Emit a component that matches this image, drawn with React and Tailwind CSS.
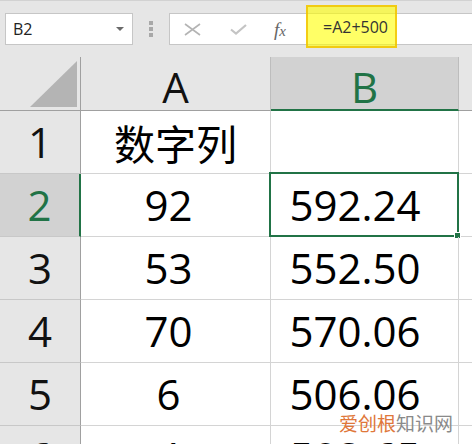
import React from "react"

const rows = [
  { n: "1", a: "数字列", b: "", cjk: true },
  { n: "2", a: "92", b: "592.24" },
  { n: "3", a: "53", b: "552.50" },
  { n: "4", a: "70", b: "570.06" },
  { n: "5", a: "6", b: "506.06" },
  { n: "6", a: "4", b: "503.65" },
]

const num = { fontFamily: '"Open Sans", "Noto Sans", sans-serif' }
const cjk = { fontFamily: '"Noto Sans CJK SC", "Noto Sans", sans-serif' }

export default function App() {
  return (
    <div className="relative w-[472px] h-[444px] overflow-hidden bg-white" style={num}>
      {/* formula bar */}
      <div className="h-[57px] bg-[#e6e6e6] border-t border-[#d2d2d2] flex items-start pt-[12px]">
        <div className="ml-[5px] w-[128px] h-[32px] bg-white border border-[#c6c6c6] flex items-center pl-[7px] pr-[8px]">
          <span className="text-[16px] text-[#222] flex-1">B2</span>
          <svg width="8" height="4" viewBox="0 0 8 4">
            <path d="M0 0 L8 0 L4 4 Z" fill="#6a6a6a" />
          </svg>
        </div>
        <div className="w-[36px] h-[32px] flex flex-col items-start justify-center gap-[2px] pl-[16px]">
          <div className="w-[4px] h-[4px] bg-[#a8a8a8]" />
          <div className="w-[4px] h-[4px] bg-[#a8a8a8]" />
          <div className="w-[4px] h-[4px] bg-[#a8a8a8]" />
        </div>
        <div className="flex-1 h-[32px] bg-white border-y border-l border-[#c6c6c6] flex items-center">
          <svg className="ml-[14px]" width="17" height="13" viewBox="0 0 17 13">
            <path d="M1 1 L16 12 M16 1 L1 12" stroke="#b4b4b4" strokeWidth="1.6" fill="none" />
          </svg>
          <svg className="ml-[29px]" width="17" height="11" viewBox="0 0 17 11">
            <path d="M1 5.5 L6 9.5 L16 1" stroke="#c4c4c4" strokeWidth="2.2" fill="none" />
          </svg>
          <span
            className="ml-[27px] text-[19px] italic text-[#666] leading-none"
            style={{ fontFamily: '"Liberation Serif", "DejaVu Serif", serif' }}
          >
            f<span className="text-[15px]">x</span>
          </span>
        </div>
      </div>

      {/* highlighted formula */}
      <div className="absolute left-[306px] top-[5px] w-[91px] h-[43px] border-2 border-[#f0c000]/80 bg-[#ffff00]/60 flex items-center pl-[15px]">
        <span className="text-[16px] text-[#333]">=A2+500</span>
      </div>

      {/* column headers */}
      <div className="flex h-[54px] bg-[#e6e6e6]">
        <div className="w-[81px] border-r border-b border-[#a0a0a0] flex items-end justify-end pr-[3px] pb-[3px]">
          <svg width="47" height="46" viewBox="0 0 47 46">
            <path d="M47 0 L47 46 L0 46 Z" fill="#b4b4b4" />
          </svg>
        </div>
        <div className="w-[190px] border-r border-r-[#bdbdbd] border-b border-b-[#a0a0a0] flex items-center justify-center pt-[6px] text-[42px] text-[#111] leading-none">
          A
        </div>
        <div className="w-[188px] bg-[#d2d2d2] border-r border-r-[#bdbdbd] border-b-2 border-b-[#217346] flex items-center justify-center pt-[7px] text-[42px] text-[#217346] leading-none">
          B
        </div>
        <div className="flex-1 border-b border-[#a0a0a0]" />
      </div>

      {/* rows */}
      {rows.map((r) => {
        const sel = r.n === "2"
        return (
          <div key={r.n} className="flex h-[63px]">
            <div
              className={`w-[81px] flex items-center justify-center text-[42px] leading-none border-b border-b-[#c8c8c8] ${
                sel
                  ? "bg-[#d2d2d2] text-[#217346] border-r-2 border-r-[#217346]"
                  : "bg-[#e6e6e6] text-[#111] border-r border-r-[#a0a0a0]"
              }`}
            >
              {r.n}
            </div>
            <div
              className={`w-[190px] border-r border-b border-[#d4d4d4] flex items-center justify-center text-black leading-none ${
                r.cjk ? "text-[41px]" : "text-[42px] pr-[14px]"
              }`}
              style={r.cjk ? cjk : undefined}
            >
              {r.a}
            </div>
            <div className="relative w-[188px] border-r border-b border-[#d4d4d4] flex items-center justify-center pr-[19px] text-[42px] text-black leading-none">
              {r.b}
              {sel && (
                <div className="absolute -left-[2px] -top-[2px] -right-[1px] -bottom-[1px] border-2 border-[#217346]">
                  <div className="absolute -right-[4px] -bottom-[4px] w-[7px] h-[7px] bg-[#217346] border border-white" />
                </div>
              )}
            </div>
            <div className="flex-1 border-b border-[#d4d4d4]" />
          </div>
        )
      })}

      {/* watermark */}
      <div className="absolute left-[339px] top-[413px] text-[19px] leading-none" style={cjk}>
        <span className="text-[#e0773a]">爱创根</span>
        <span className="text-[#8a8a8a]">知识网</span>
      </div>
    </div>
  )
}
